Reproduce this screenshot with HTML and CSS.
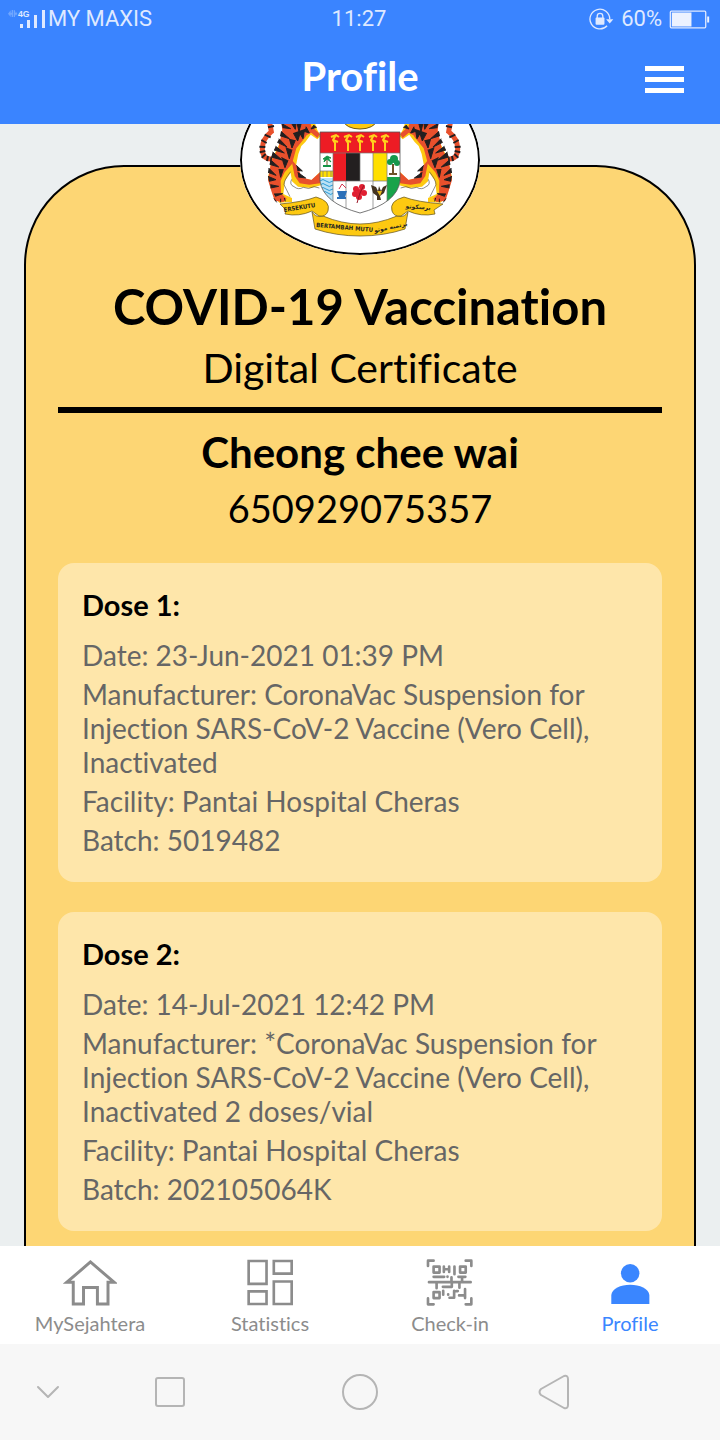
FILE: index.html
```html
<!DOCTYPE html>
<html lang="en">
<head>
<meta charset="utf-8">
<meta name="viewport" content="width=device-width, initial-scale=1">
<title>Profile</title>
<link rel="stylesheet" href="styles.css">
</head>
<body>
<header class="top">
  <div class="status">
    <div class="status-left">
      <svg class="signal" viewBox="24 24 114 60" aria-hidden="true">
        <path d="M24 38l8-10v7h3V27h4v21h-4v-7h-3v7zM41 28h4v7h2v-4l5 7-5 7v-4h-2v7h-4z" fill="#6fa6ff"/>
        <path d="M60 69h9v12h-9zM81 57h9v24h-9zM102 42h9v39h-9zM126 27h9v54h-9z" fill="#dfe9ff"/>
        <text class="net" x="54" y="48">4G</text>
      </svg>
      <span>MY MAXIS</span>
    </div>
    <span class="clock">11:27</span>
    <div class="status-right">
      <svg class="lock" viewBox="88 22 76 68" aria-hidden="true">
        <path d="M143 75A30 30 0 1 1 151 55" fill="none" stroke="#dfe9ff" stroke-width="4"/>
        <path d="M140 55h22l-11 13z" fill="#dfe9ff"/>
        <rect x="108" y="50" width="27" height="22" rx="3" fill="#dfe9ff"/>
        <path d="M113 52v-6a8 8 0 0 1 17 0v6" fill="none" stroke="#dfe9ff" stroke-width="4"/>
      </svg>
      <span>60%</span>
      <svg class="battery" viewBox="326 25 122 58" aria-hidden="true">
        <rect x="328.500" y="28.500" width="108" height="51" rx="3" fill="none" stroke="#dfe9ff" stroke-width="4"/>
        <path d="M333 33h60v42h-60zM441 45h6v18h-6z" fill="#ecf2ff"/>
      </svg>
    </div>
  </div>
  <div class="appbar">
    <h1 class="page-title">Profile</h1>
    <button class="menu" type="button" aria-label="Menu"><i></i><i></i><i></i></button>
  </div>
</header>

<main class="content">
  <article class="card">
    <div class="seal">
      <svg class="crest" viewBox="240 65 240 190" role="img" aria-label="Coat of arms">
        <defs>
          <g id="tiger" transform="translate(230 120) scale(.33333)">
            <path d="M112 -20Q120 10 124 35Q96 58 97 88Q99 122 130 116" fill="none" stroke="#e8502c" stroke-width="15"/>
            <path d="M112 5l16-5M114 22l18-4M104 44l18 8M94 60l16 9M88 80l18 1M89 97l17-4M95 113l12-11M111 123l3-15M124 125v-13" stroke="#231f20" stroke-width="6"/>
            <path d="M152 -20H245L262 30L272 48L262 58L242 44L226 66L214 78L205 102L197 142L212 174L246 180L272 154V196L244 204L204 200L186 184L182 158L165 182L160 222L186 234L186 246L148 248L136 234L121 200L114 172L126 118L149 70L158 30Z" fill="#fdc911"/>
            <path d="M150 -20H232L244 18L226 52L199 85L186 132L164 157L152 182L153 220L170 236L160 246L134 242L125 216L114 180L124 122L145 85L157 30Z" fill="#e8502c"/>
            <path d="M184 118L206 144L214 172L244 180L270 157V190L238 194L209 190L194 168Z" fill="#e8502c"/>
            <path d="M240 16L270 42L262 54L244 38L225 48Z" fill="#e8502c"/>
            <path d="M154 10l28 16-24-3M153 34l25 22-28-9M147 56l24 25-29-14M137 79l26 20-31-9M128 96l28 24-32-9M121 119l25 22-27-8M116 144l22 22-24-9M114 169l24 10-21 5M121 194l25 5-24 5M132 222l26-1-22 8M180 3l16 25 3-28 8 35 10-37M190 39l13 24 7-22 9 15 5-29M178 56l8 28 10-23M168 82l10 34 8-27M155 112l10 31 9-22M147 147l5 25 8-24M199 136l18 17-15-2M203 157l24 17-22-3M252 15l-9 12 17-5M228 20l10 19-16-5" fill="#231f20" stroke="#231f20" stroke-width="3" stroke-linejoin="round"/>
            <path d="M182 155Q162 180 162 194L180 230M185 178Q177 194 192 200Q205 211 220 202Q236 210 252 200L268 204" fill="none" stroke="#555" stroke-width="2"/>
            <path d="M140 247l-8-12m20 12v-11m14 8l-3-10" stroke="#231f20" stroke-width="3"/>
          </g>
          <clipPath id="shield"><path d="M320 132H400V181Q397 203 360 213Q323 203 320 181Z"/></clipPath>
          <path id="kris" d="M0 17V9L-2 6L1 1M-4 3L1 1L4 3M-2 6L3 8" fill="none" stroke="#ffd21c" stroke-width="2"/>
        </defs>
        <use href="#tiger"/>
        <use href="#tiger" transform="translate(720 0) scale(-1 1)"/>
        <ellipse cx="360" cy="121" rx="16" ry="8" fill="#fdc911" stroke="#6d5a10"/>
        <g clip-path="url(#shield)">
          <path d="M320 132h80v84h-80z" fill="#fff"/>
          <path d="M320 132h80v21h-80zM333 153h13v28h-13z" fill="#ed1c24"/>
          <path d="M346 153h14v28h-14z" fill="#231f20"/>
          <path d="M373 153h14v28h-14zM320 171h13v6h-13z" fill="#ffdf00"/>
          <path d="M387 177h13v36h-13z" fill="#18a34a"/>
          <path d="M320 178h13v26h-13z" fill="#b9e1f5"/>
          <path d="M320 181q3-3 6 0t7 0M320 185q3-3 6 0t7 0M320 189q3-3 6 0t7 0M322 193q3-3 6 0t5 0" fill="none" stroke="#2b9bd7"/>
          <path d="M320 171h13M323 171v6M327 171v6M331 171v6M333 153v60M346 181v32M360 153v28M373 153v60M387 153v60M320 153h80M333 181h54" fill="none" stroke="#777" stroke-width=".7"/>
          <path d="M327 160v6" stroke="#704c1c" stroke-width="1"/>
          <path d="M323 166h8" stroke="#169447" stroke-width="2"/>
          <path d="M323 159l4-3 4 2-3 0 3 4-4-3-3 3 1-3z" fill="#169447" stroke="#169447"/>
          <path d="M393 164v9M389 174h8" stroke="#70532a" stroke-width="2"/>
          <circle cx="390" cy="162" r="3" fill="#16974b"/><circle cx="394" cy="159" r="4" fill="#16974b"/><circle cx="397" cy="163" r="3" fill="#16974b"/>
          <path d="M337 191h10l-2 6h-6zM337 197h9v2h-9z" fill="#2c70b8"/><path d="M339 189l3-5 4 4" fill="none" stroke="#d3344d" stroke-width="1"/>
          <g fill="#e11f32"><circle cx="356" cy="189" r="3"/><circle cx="362" cy="187" r="3"/><circle cx="364" cy="193" r="3"/><circle cx="359" cy="197" r="3"/><circle cx="355" cy="194" r="3"/><circle cx="360" cy="192" r="3"/></g>
          <path d="M360 193l4-8M360 193l-3 10" stroke="#9b1425"/>
          <path d="M371 185l5 2 2 4 1-5 2 5 2-4 4-2-3 8-4 3 1 4h-4v-4l-4-3z" fill="#433321"/><path d="M377 191h5l-2 5z" fill="#e7b91c"/>
        </g>
        <path d="M320 132H400V181Q397 203 360 213Q323 203 320 181Z" fill="none" stroke="#555" stroke-width=".8"/>
        <use href="#kris" x="335" y="134"/><use href="#kris" x="348" y="134"/><use href="#kris" x="360" y="134"/><use href="#kris" x="373" y="134"/><use href="#kris" x="385" y="134"/>
        <g fill="#fdc911" stroke="#5e501c" stroke-width=".7">
          <path d="M312 212Q316 218 323 216Q342 224 360 224Q378 224 397 216Q404 218 408 212L405 229Q384 236 360 236Q336 236 315 229Z"/>
          <path d="M280 204Q303 202 316 197Q331 201 328 211Q326 217 319 216L312 211Q299 217 285 214L286 210Z"/>
          <path d="M443 204Q417 202 404 197Q389 201 392 211Q394 217 401 216L408 211Q421 217 435 214L434 210Z"/>
        </g>
        <text class="motto" x="284" y="212" transform="rotate(-9 284 212)">ERSEKUTU</text>
        <text class="motto" x="316" y="227" transform="rotate(5 316 227)">BERTAMBAH MUTU</text>
        <text class="jawi" x="391" y="229" text-anchor="middle" transform="rotate(-12 391 229)">برتمبه موتو</text>
        <text class="jawi" x="418" y="209" text-anchor="middle" transform="rotate(4 418 209)">برسکوتو</text>
      </svg>
    </div>
    <h2 class="cert-title">COVID-19 Vaccination</h2>
    <p class="cert-sub">Digital Certificate</p>
    <hr class="rule">
    <h3 class="holder">Cheong chee wai</h3>
    <p class="holder-id">650929075357</p>
    <section class="dose">
      <h4 class="dose-title">Dose 1:</h4>
      <p>Date: 23-Jun-2021 01:39 PM</p>
      <p>Manufacturer: CoronaVac Suspension for Injection SARS-CoV-2 Vaccine (Vero Cell), Inactivated</p>
      <p>Facility: Pantai Hospital Cheras</p>
      <p>Batch: 5019482</p>
    </section>
    <section class="dose">
      <h4 class="dose-title">Dose 2:</h4>
      <p>Date: 14-Jul-2021 12:42 PM</p>
      <p>Manufacturer: *CoronaVac Suspension for Injection SARS-CoV-2 Vaccine (Vero Cell), Inactivated 2 doses/vial</p>
      <p>Facility: Pantai Hospital Cheras</p>
      <p>Batch: 202105064K</p>
    </section>
  </article>
</main>

<nav class="tabs">
  <a class="tab" href="#home">
    <svg class="tab-icon" viewBox="130 40 166 142" aria-hidden="true"><path d="M213 49L142 110H161V176H192V126H234V176H266V110H284Z" fill="none" stroke="#8c8c8c" stroke-width="9"/></svg>
    <span>MySejahtera</span>
  </a>
  <a class="tab" href="#statistics">
    <svg class="tab-icon" viewBox="680 40 142 142" aria-hidden="true"><path d="M685 46h54v69h-54zM761 46h54v38h-54zM685 138h54v38h-54zM761 108h54v68h-54z" fill="none" stroke="#8c8c8c" stroke-width="8"/></svg>
    <span>Statistics</span>
  </a>
  <a class="tab" href="#checkin">
    <svg class="tab-icon" viewBox="78 40 144 142" aria-hidden="true">
      <g fill="none" stroke="#8c8c8c" stroke-width="8" stroke-linecap="round" stroke-linejoin="round">
        <path d="M84 61V45H101M198 45H215V61M84 159V177H101M198 177H215V159"/>
        <path d="M101 63h18v18h-18zM181 63h17v18h-17zM101 140h18v18h-18z"/>
        <path d="M132 63v16M132 71h16M148 63v16M164 63v23M101 94h32M143 93v1M155 95v14M176 94h21M187 94v14M87 110h126M110 112v16M129 124h27V112M179 112v15M130 136v12M145 147v1M163 136v21h-14M174 137h-4M196 131v27M196 150h-18"/>
      </g>
    </svg>
    <span>Check-in</span>
  </a>
  <a class="tab active" href="#profile" aria-current="page">
    <svg class="tab-icon" viewBox="619 40 142 142" aria-hidden="true"><circle cx="689" cy="83" r="28" fill="#3a86ff"/><path d="M632 176V149C634 130 660 118 689 118S745 130 747 149V176Z" fill="#3a86ff"/></svg>
    <span>Profile</span>
  </a>
</nav>

<div class="sysnav">
  <button type="button" aria-label="Hide"><svg width="24" height="16" viewBox="0 0 24 16"><path d="M2 3L12 13L22 3"/></svg></button>
  <button type="button" aria-label="Recents"><svg width="32" height="32" viewBox="0 0 32 32"><rect x="2" y="2" width="28" height="28" rx="2"/></svg></button>
  <button type="button" aria-label="Home"><svg width="38" height="38" viewBox="0 0 38 38"><circle cx="19" cy="19" r="17"/></svg></button>
  <button type="button" aria-label="Back"><svg width="32" height="36" viewBox="0 0 32 36"><path d="M26 2L3 15Q0 18 3 21L26 34Q30 35 30 31V5Q30 1 26 2Z"/></svg></button>
</div>
</body>
</html>
```
FILE: styles.css
```css
* { box-sizing: border-box; }

body {
  margin: 0;
  height: 100vh;
  display: flex;
  flex-direction: column;
  background: #ebeff0;
  color: #000;
  font-family: Lato, "Noto Sans", sans-serif;
  font-variant-ligatures: no-common-ligatures;
}

h1, h2, h3, h4, p { margin: 0; }
svg { display: block; }

button {
  padding: 0;
  border: 0;
  background: none;
}

.top {
  flex: none;
  background: #3a84ff;
  color: #fff;
}

.status {
  display: grid;
  grid-template-columns: 1fr auto 1fr;
  align-items: center;
  height: 38px;
  padding: 0 10px 0 8px;
  font: 22px/38px Roboto, sans-serif;
  color: #dfe9ff;
}

.status-left,
.status-right {
  display: flex;
  align-items: center;
}

.status-left { gap: 2px; }

.status-right {
  justify-content: flex-end;
  gap: 7px;
}

.signal { width: 38px; height: 20px; }
.net { font: bold 26px "Liberation Sans", sans-serif; fill: #dfe9ff; }
.lock { width: 25px; height: 23px; }
.battery { width: 41px; height: 19px; }

.appbar {
  display: grid;
  grid-template-columns: 1fr auto 1fr;
  align-items: center;
  height: 86px;
  padding: 0 36px 10px;
}

.page-title {
  grid-column: 2;
  font-size: 40px;
  line-height: 48px;
  font-weight: 700;
}

.menu {
  justify-self: end;
  display: grid;
  gap: 6px;
  width: 39px;
  padding-top: 6px;
}

.menu i {
  height: 5px;
  background: #fff;
}

.content {
  flex: 1;
  min-height: 0;
  overflow: hidden;
  padding: 41px 24px 0;
}

.card {
  position: relative;
  padding: 111px 32px 48px;
  border: 2px solid #000;
  border-radius: 100px 100px 0 0;
  background: #fdd674;
  text-align: center;
}

.seal {
  position: absolute;
  top: -102px;
  left: 50%;
  width: 240px;
  height: 190px;
  margin-left: -120px;
  border-radius: 50%;
  background: #fff;
  overflow: hidden;
}

.seal::after {
  content: "";
  position: absolute;
  inset: 0;
  border: 2px solid #000;
  border-radius: 50%;
}

.crest { width: 100%; height: 100%; }
.motto { font: bold 6px "DejaVu Sans Condensed", "Liberation Sans", sans-serif; fill: #231f20; }
.jawi { font: bold 6px "DejaVu Sans", sans-serif; fill: #231f20; }

.cert-title {
  font-size: 49px;
  line-height: 56px;
  font-weight: 700;
}

.cert-sub {
  padding: 10px 0 15px;
  font-size: 41px;
  line-height: 48px;
}

.rule {
  height: 6px;
  margin: 0 0 15px;
  border: 0;
  background: #000;
}

.holder {
  font-size: 42px;
  line-height: 48px;
  font-weight: 700;
}

.holder-id {
  padding: 8px 0 31px;
  font-size: 38px;
  line-height: 48px;
}

.dose {
  display: grid;
  gap: 5px;
  margin-bottom: 30px;
  padding: 25px 24px;
  border-radius: 16px;
  background: #fee6aa;
  color: #666;
  font-size: 28px;
  line-height: 34px;
  text-align: left;
}

.dose-title {
  padding-bottom: 11px;
  color: #000;
  font-size: 29px;
  line-height: 34px;
  font-weight: 700;
}

.tabs {
  flex: none;
  display: grid;
  grid-template-columns: repeat(4, 1fr);
  padding: 13px 0 8px;
  background: #fff;
}

.tab {
  display: grid;
  justify-items: center;
  gap: 4px;
  color: #8c8c8c;
  font-size: 20px;
  line-height: 26px;
  text-decoration: none;
}

.tab-icon { height: 47px; }
.active { color: #3a86ff; }

.sysnav {
  flex: none;
  display: grid;
  grid-template-columns: 96fr 148fr 232fr 156fr 88fr;
  align-items: center;
  justify-items: center;
  height: 96px;
  background: #f7f7f7;
}

.sysnav svg {
  fill: none;
  stroke: #b5b5b5;
  stroke-width: 2;
  stroke-linecap: round;
  stroke-linejoin: round;
}
```
